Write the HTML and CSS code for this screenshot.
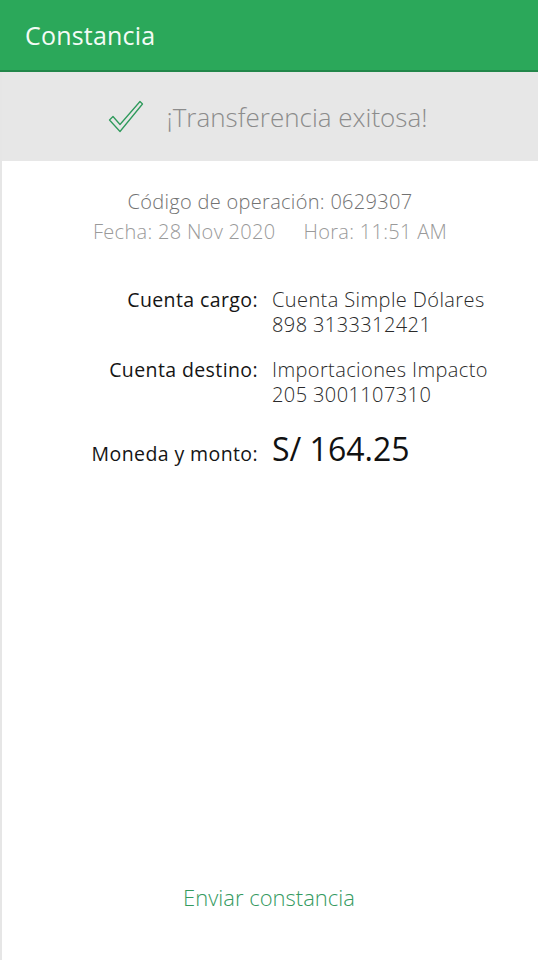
FILE: index.html
```html
<!DOCTYPE html>
<html lang="es">
<head>
    <meta charset="UTF-8">
    <meta name="viewport" content="width=device-width, initial-scale=1.0">
    <title>Constancia</title>
    <link rel="stylesheet" href="styles.css">
</head>
<body>
    <div class="screen">
        <header class="topbar">
            <h1>Constancia</h1>
        </header>

        <div class="status">
            <svg class="check" width="36" height="34" viewBox="0 0 36 34">
                <path d="M1.5 20 L5 16.5 L12 24.5 L32 1.5 L34.5 4 L12 31.5 Z" fill="none" stroke="#2f9a5c" stroke-width="1.3" stroke-linejoin="round"/>
            </svg>
            <span class="status-text">¡Transferencia exitosa!</span>
        </div>

        <main class="content">
            <div class="meta">
                <p class="code">Código de operación: 0629307</p>
                <p class="date">Fecha: 28 Nov 2020<span class="sep"></span>Hora: 11:51 AM</p>
            </div>

            <div class="details">
                <div class="label">Cuenta cargo:</div>
                <div class="value">Cuenta Simple Dólares<br>898 3133312421</div>

                <div class="label">Cuenta destino:</div>
                <div class="value">Importaciones Impacto<br>205 3001107310</div>

                <div class="label label-amount">Moneda y monto:</div>
                <div class="value amount">S/ 164.25</div>
            </div>

            <a class="send" href="#">Enviar constancia</a>
        </main>
    </div>
</body>
</html>
```

FILE: styles.css
```css
body {
    margin: 0;
    font-family: 'Open Sans', 'Noto Sans', sans-serif;
    background-color: #fff;
}

.screen {
    width: 538px;
    height: 960px;
    display: flex;
    flex-direction: column;
    border-left: 2px solid #e6e6e6;
    box-sizing: border-box;
}

.topbar {
    height: 72px;
    background-color: #2ba85a;
    border-bottom: 2px solid #22874a;
    display: flex;
    align-items: center;
    padding-left: 25px;
    box-sizing: border-box;
    margin-left: -2px;
}

.topbar h1 {
    margin: 0;
    color: #f4fbf6;
    font-size: 25px;
    font-weight: 400;
    letter-spacing: 0.2px;
}

.status {
    height: 89px;
    background-color: #e7e7e7;
    display: flex;
    align-items: center;
    justify-content: center;
    gap: 22px;
    padding-right: 4px;
}

.status-text {
    color: #8c8c8c;
    font-size: 26px;
    font-weight: 300;
}

.content {
    flex: 1;
    display: flex;
    flex-direction: column;
}

.meta {
    text-align: center;
    padding-top: 26px;
}

.meta p {
    margin: 0;
}

.code {
    color: #727272;
    font-size: 20px;
    line-height: 30px;
    font-weight: 300;
    letter-spacing: 0.3px;
}

.date {
    color: #9a9a9a;
    font-size: 20px;
    font-weight: 300;
    line-height: 30px;
    letter-spacing: 0.3px;
}

.sep {
    display: inline-block;
    width: 28px;
}

.details {
    display: grid;
    grid-template-columns: 256px 1fr;
    column-gap: 14px;
    row-gap: 20px;
    margin-top: 40px;
    color: #222;
    font-size: 20px;
    line-height: 25px;
}

.label {
    text-align: right;
    font-weight: 400;
    font-size: 19.5px;
    color: #151515;
    letter-spacing: 0.4px;
}

.value {
    font-weight: 300;
    color: #2a2a2a;
    letter-spacing: 0.4px;
}

.label-amount {
    align-self: baseline;
}

.amount {
    align-self: baseline;
    font-size: 32px;
    line-height: 40px;
    font-weight: 400;
    color: #111;
    margin-top: 2px;
    letter-spacing: 0;
}

.send {
    margin-top: auto;
    margin-bottom: 48px;
    text-align: center;
    color: #359a5f;
    font-size: 22px;
    font-weight: 300;
    text-decoration: none;
    padding-right: 2px;
}
```
